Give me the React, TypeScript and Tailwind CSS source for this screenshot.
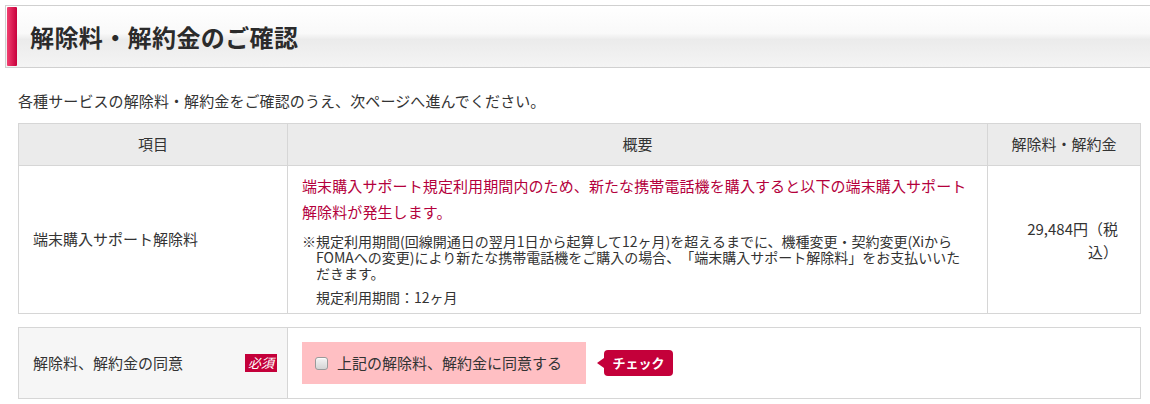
import React from "react";

const jp = { fontFamily: '"Noto Sans CJK JP", "Noto Sans", sans-serif' };

export default function App() {
  return (
    <div
      className="w-[1150px] h-[404px] bg-white text-[#333] overflow-hidden [text-spacing-trim:space-all]"
      style={jp}
    >
      {/* Page title bar */}
      <div className="pt-[5px] pl-[5px]">
        <div className="flex items-stretch h-[63px] border-y border-l border-[#d0d0d0] bg-[linear-gradient(to_bottom,#ffffff_0%,#f9f9f9_45%,#ebebeb_55%,#f4f4f4_100%)]">
          <div className="my-[1px] ml-[1px] w-[10px] bg-[linear-gradient(to_right,#f04070,#c8003c)] rounded-[1px]" />
          <h1 className="flex items-center pl-[13px] text-[24px] font-bold tracking-[0.4px] text-[#2b2b2b]">
            解除料・解約金のご確認
          </h1>
        </div>
      </div>

      <p className="mt-[23px] ml-[18px] text-[15px] tracking-[0.1px] leading-[20px]">
        各種サービスの解除料・解約金をご確認のうえ、次ページへ進んでください。
      </p>

      {/* Fee table */}
      <table className="mt-[12px] ml-[18px] w-[1122px] border-collapse text-[15px] table-fixed">
        <colgroup>
          <col className="w-[269px]" />
          <col className="w-[700px]" />
          <col className="w-[153px]" />
        </colgroup>
        <thead>
          <tr className="h-[42px] bg-[#ebebeb]">
            <th className="border border-[#d6d6d6] font-normal text-center">項目</th>
            <th className="border border-[#d6d6d6] font-normal text-center">概要</th>
            <th className="border border-[#d6d6d6] font-normal text-center">解除料・解約金</th>
          </tr>
        </thead>
        <tbody>
          <tr className="h-[148px]">
            <td className="border border-[#d6d6d6] px-[14px] align-middle">端末購入サポート解除料</td>
            <td className="border border-[#d6d6d6] px-[14px] pt-[7px] pb-[6px] align-top">
              <p className="text-[#b4003c] leading-[26px] tracking-[0.1px]">
                端末購入サポート規定利用期間内のため、新たな携帯電話機を購入すると以下の端末購入サポート解除料が発生します。
              </p>
              <p className="mt-[8px] pl-[14px] -indent-[14px] text-[14px] leading-[16px]">
                ※規定利用期間(回線開通日の翌月1日から起算して12ヶ月)を超えるまでに、機種変更・契約変更(XiからFOMAへの変更)により新たな携帯電話機をご購入の場合、「端末購入サポート解除料」をお支払いいただきます。
              </p>
              <p className="mt-[8px] pl-[14px] text-[14px] leading-[16px]">規定利用期間：12ヶ月</p>
            </td>
            <td className="border border-[#d6d6d6] pl-[36px] pr-[22px] text-right leading-[23px] align-middle">
              29,484円（税込）
            </td>
          </tr>
        </tbody>
      </table>

      {/* Agreement table */}
      <table className="mt-[13px] ml-[18px] w-[1122px] border-collapse text-[15px] table-fixed">
        <colgroup>
          <col className="w-[269px]" />
          <col className="w-[853px]" />
        </colgroup>
        <tbody>
          <tr className="h-[70px]">
            <td className="border border-[#d6d6d6] bg-[#f6f6f6] pl-[14px] pr-[10px]">
              <div className="flex items-center justify-between">
                <span>解除料、解約金の同意</span>
                <span className="flex items-center justify-center w-[32px] h-[18px] bg-[#c4003a] text-white text-[13px] italic">
                  必須
                </span>
              </div>
            </td>
            <td className="border border-[#d6d6d6] p-[14px]">
              <div className="flex items-center">
                <label className="flex items-center w-[284px] h-[42px] bg-[#ffbfc3] pl-[13px] gap-[9px]">
                  <input
                    type="checkbox"
                    className="appearance-none w-[13px] h-[13px] rounded-[3px] border border-[#9a9a9a] bg-[linear-gradient(to_bottom,#f4f4f4,#d4d4d4)] shadow-[inset_0_1px_1px_rgba(255,255,255,0.8)]"
                  />
                  <span className="text-[15px]">上記の解除料、解約金に同意する</span>
                </label>
                <span className="relative ml-[18px] flex items-center justify-center w-[69px] h-[26px] rounded-[4px] bg-[#c4003a] text-white text-[13px] font-bold">
                  <span className="absolute left-[-7px] top-[8px] w-0 h-0 border-y-[5px] border-y-transparent border-r-[7px] border-r-[#c4003a]" />
                  チェック
                </span>
              </div>
            </td>
          </tr>
        </tbody>
      </table>
    </div>
  );
}
